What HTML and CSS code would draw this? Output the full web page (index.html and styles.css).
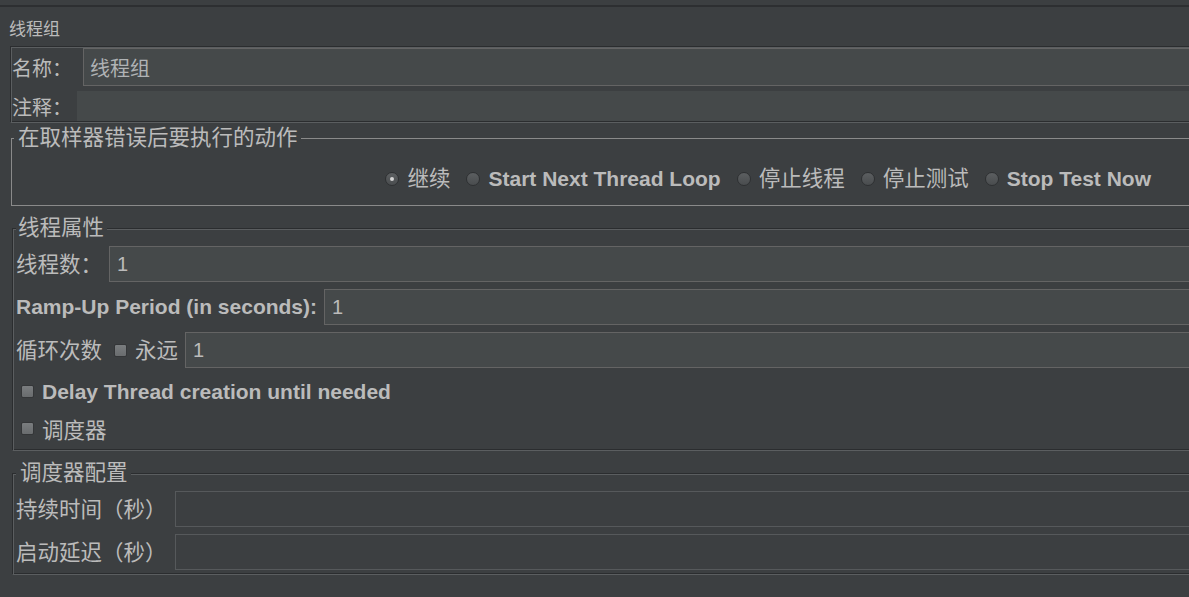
FILE: index.html
```html
<!DOCTYPE html>
<html lang="zh-CN">
<head>
<meta charset="utf-8">
<title>线程组</title>
<link rel="stylesheet" href="styles.css">
</head>
<body>
<div class="topbar"></div>
<div class="title">线程组</div>

<div class="namepanel">
  <div class="nrow">
    <span class="nlabel">名称：</span>
    <div class="field name-field">线程组</div>
  </div>
  <div class="nrow crow">
    <span class="nlabel clabel">注释：</span>
    <div class="comment-field"></div>
  </div>
</div>

<fieldset class="group action">
  <legend class="cjk">在取样器错误后要执行的动作</legend>
  <div class="radios">
    <label class="radio"><span class="rb on"></span><span class="cjk lift">继续</span></label>
    <label class="radio"><span class="rb"></span><b>Start Next Thread Loop</b></label>
    <label class="radio"><span class="rb"></span><span class="cjk lift">停止线程</span></label>
    <label class="radio"><span class="rb"></span><span class="cjk lift">停止测试</span></label>
    <label class="radio"><span class="rb"></span><b>Stop Test Now</b></label>
  </div>
</fieldset>

<fieldset class="group etched threads">
  <legend class="cjk">线程属性</legend>
  <div class="rows">
    <div class="frow">
      <span class="cjk lift flabel">线程数：</span>
      <div class="field">1</div>
    </div>
    <div class="frow">
      <b class="flabel">Ramp-Up Period (in seconds):</b>
      <div class="field">1</div>
    </div>
    <div class="frow last">
      <span class="cjk lift">循环次数</span>
      <span class="cb loopcb"></span>
      <span class="cjk lift flabel">永远</span>
      <div class="field">1</div>
    </div>
    <div class="crow4">
      <span class="cb"></span><b>Delay Thread creation until needed</b>
    </div>
    <div class="crow5">
      <span class="cb"></span><span class="cjk">调度器</span>
    </div>
  </div>
</fieldset>

<fieldset class="group etched sched">
  <legend class="cjk">调度器配置</legend>
  <div class="rows">
    <div class="frow">
      <span class="cjk lift slabel">持续时间（秒）</span>
      <div class="field off"></div>
    </div>
    <div class="frow lastrow">
      <span class="cjk lift slabel">启动延迟（秒）</span>
      <div class="field off"></div>
    </div>
  </div>
</fieldset>
</body>
</html>
```

FILE: styles.css
```css
* { box-sizing: border-box; }
html, body { margin: 0; padding: 0; }
body {
  width: 1189px;
  height: 597px;
  overflow: hidden;
  background: #3c3f41;
  color: #bbbbbb;
  font-family: "Liberation Sans", "Noto Sans CJK SC", sans-serif;
  font-size: 21px;
}
b { font-weight: bold; }
.cjk { font-size: 21.5px; }
.lift { padding-bottom: 4px; }

.topbar {
  height: 7px;
  border-bottom: 2px solid #2d2f31;
}
.title {
  height: 39px;
  padding: 11px 0 0 9px;
  font-size: 17px;
  line-height: 24px;
}

/* etched border helper */
.namepanel,
.etched {
  border-top: 1px solid #2b2d2f;
  border-left: 1px solid #2b2d2f;
  border-bottom: 1px solid #5b5e60;
  border-right: 1px solid #5b5e60;
  box-shadow: inset 1px 1px 0 #5b5e60, inset -1px -1px 0 #2b2d2f;
}

.namepanel {
  margin: 0 -10px 0 10px;
  height: 77px;
  padding: 1px 0 0 1px;
}
.nrow {
  display: flex;
  align-items: center;
  height: 38px;
  font-size: 20px;
}
.nlabel { width: 71px; flex: none; }
.crow { margin-top: 5px; height: 30px; }
.clabel { width: 65px; }
.comment-field {
  flex: 1;
  align-self: stretch;
  background: #45494a;
}

.field {
  flex: 1;
  align-self: stretch;
  display: flex;
  align-items: center;
  background: #45494a;
  border: 1px solid #646464;
  padding-left: 7px;
  font-size: 20px;
  color: #bbbbbb;
}
.name-field { padding-left: 6px; color: #b0b3b5; }
.field.off {
  background: transparent;
  border-color: #56595b;
}

fieldset.group {
  min-inline-size: 0;
  padding: 0;
}
fieldset.group legend {
  line-height: 22px;
  background: #3c3f41;
}

fieldset.action {
  margin: 4px -10px 0 11px;
  border: 1px solid #8a8a8a;
}
.action legend {
  margin-left: 2px;
  padding: 0 3px 0 4px;
}
.radios {
  display: flex;
  justify-content: flex-end;
  align-items: center;
  height: 56px;
  padding: 3px 47px 0 0;
  gap: 16px;
}
.radio {
  display: flex;
  align-items: center;
  gap: 8px;
}
.rb {
  width: 14px;
  height: 14px;
  border-radius: 50%;
  background: linear-gradient(#5c5f61, #4a4d4f);
  border: 1px solid #2e3032;
  display: flex;
  align-items: center;
  justify-content: center;
}
.rb.on::after {
  content: "";
  width: 4px;
  height: 4px;
  border-radius: 50%;
  background: #d4d4d4;
}

fieldset.threads {
  margin: 11px -10px 0 12px;
  padding: 0 0 1px 3px;
}
.threads legend { padding: 0 3px 0 2px; }
fieldset.sched {
  margin: 11px -10px 0 12px;
  padding: 0 0 4px 3px;
}
.sched legend { padding: 0 3px 0 4px; }

.rows { padding-top: 7px; }
.frow {
  display: flex;
  align-items: center;
  height: 36px;
  margin-bottom: 7px;
}
.frow.last { margin-bottom: 4px; }
.frow.lastrow { margin-bottom: 0; }
.flabel { margin-right: 7px; }
.slabel { width: 159px; flex: none; }

.cb {
  width: 13px;
  height: 13px;
  border-radius: 2px;
  background: linear-gradient(#7a7d7f, #696c6e);
  border: 1px solid #343638;
  flex: none;
}
.loopcb { margin: 0 8px 0 12px; }
.crow4, .crow5 {
  display: flex;
  align-items: center;
  gap: 8px;
  padding-left: 5px;
}
.crow4 { height: 39px; }
.crow5 { height: 38px; padding-bottom: 3px; }
```
